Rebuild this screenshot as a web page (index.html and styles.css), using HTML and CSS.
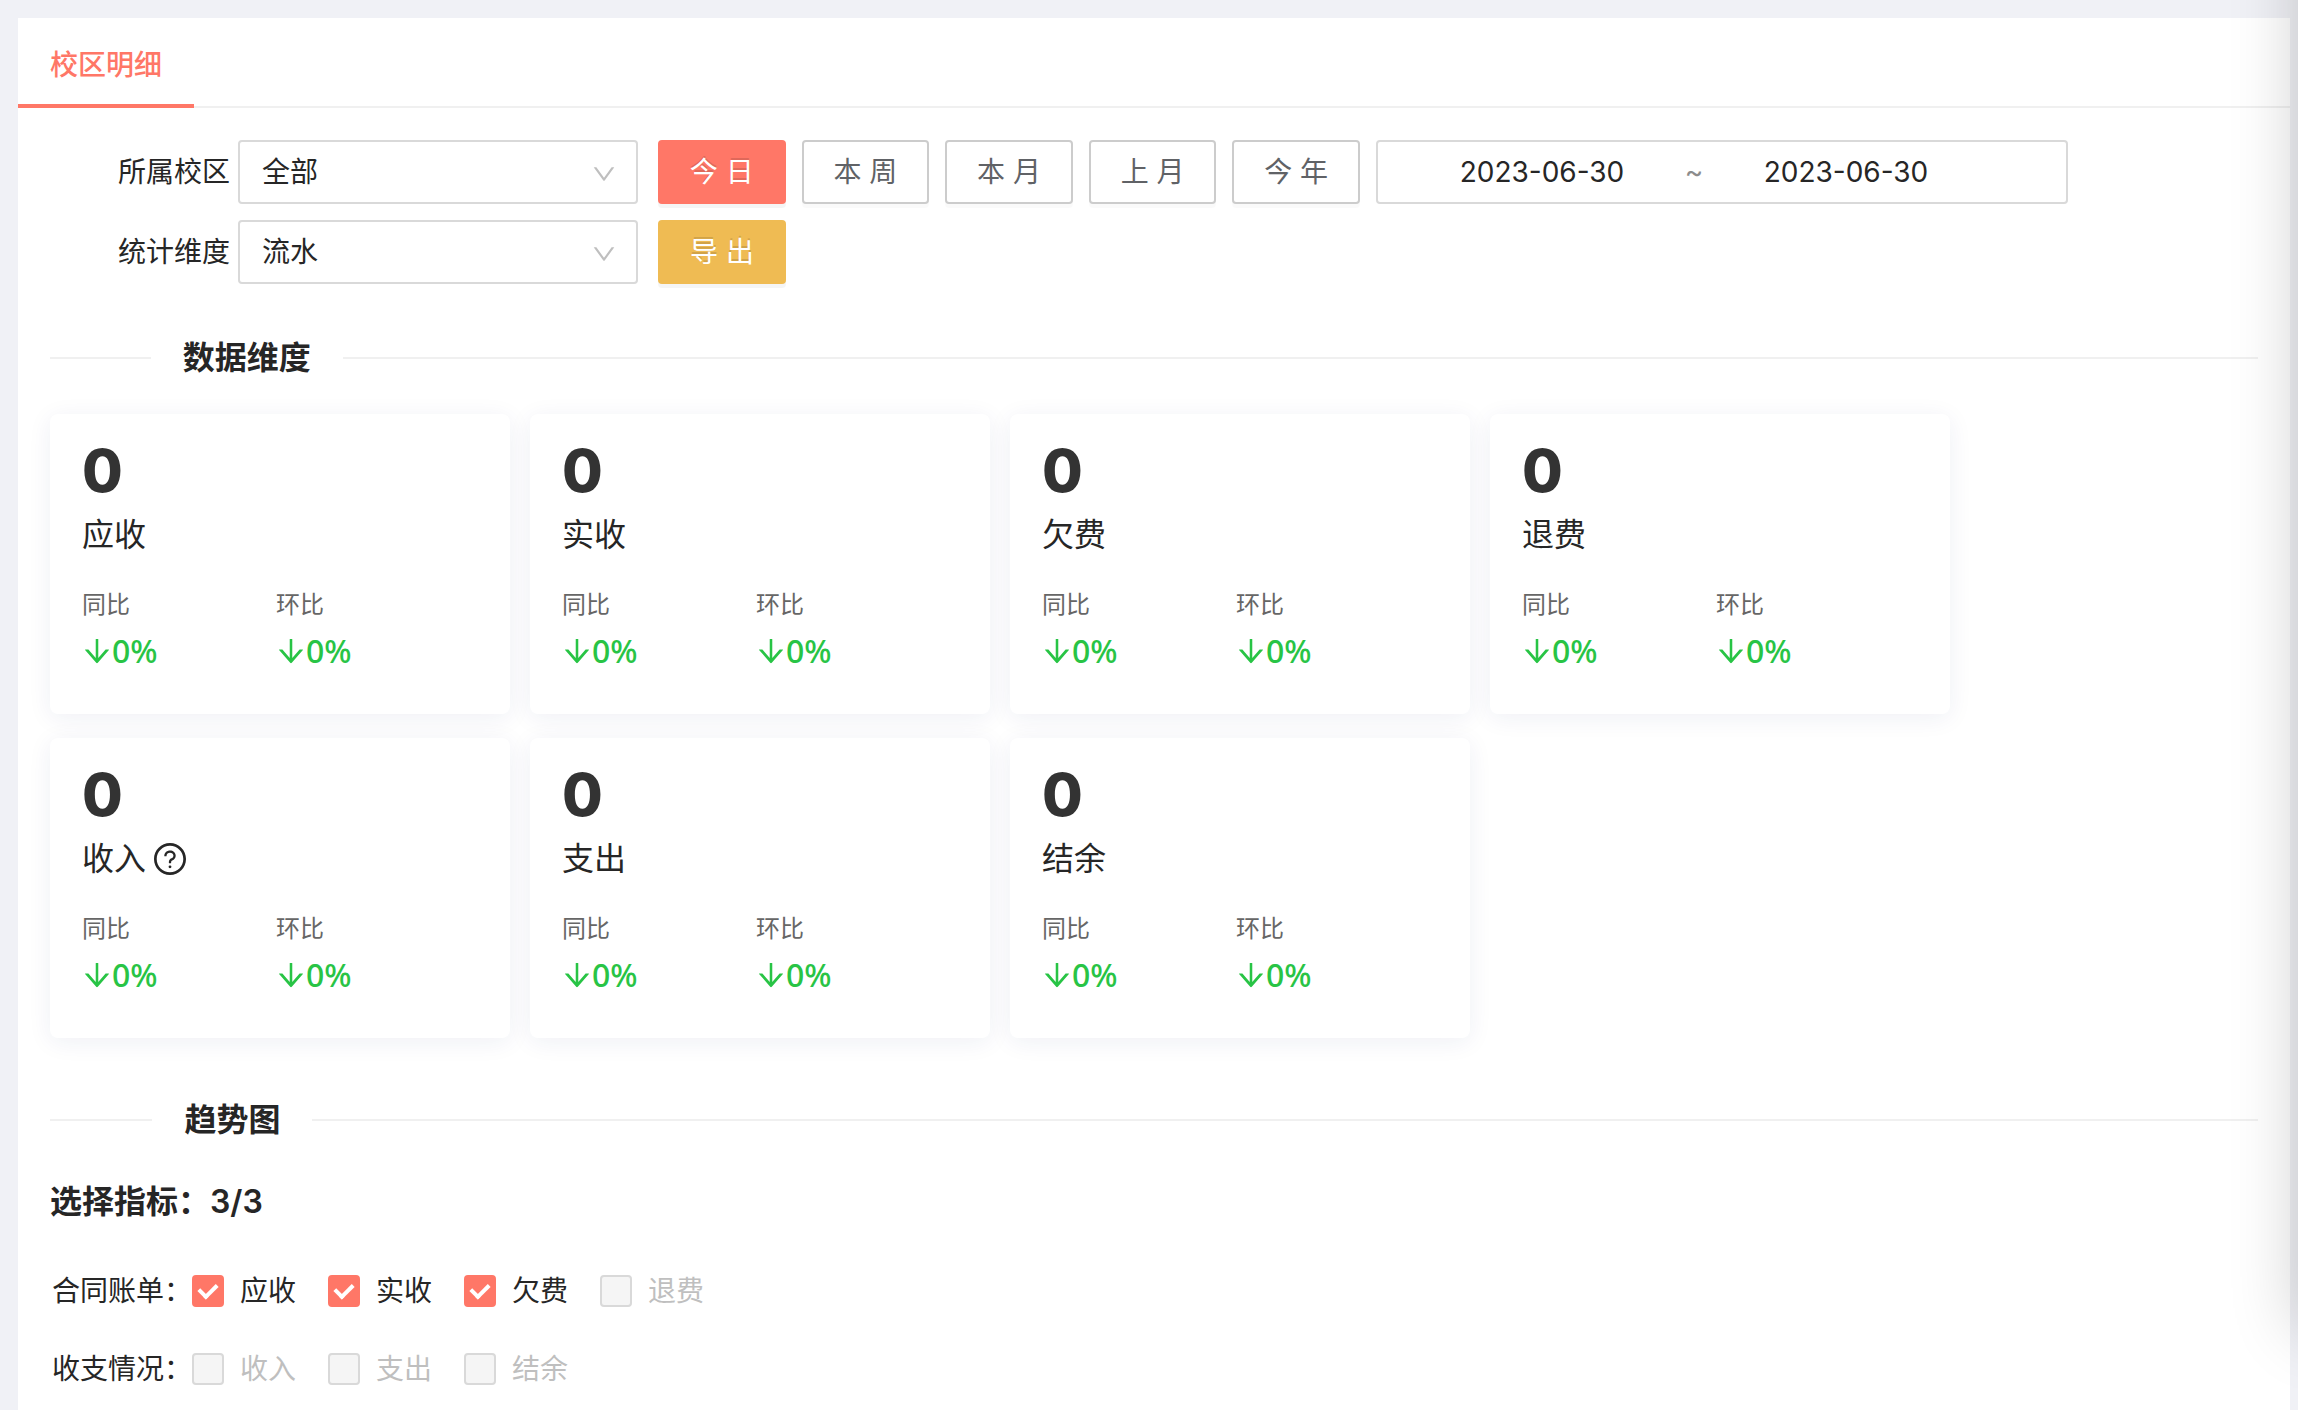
FILE: index.html
```html
<!DOCTYPE html>
<html lang="zh-CN">
<head>
<meta charset="utf-8">
<meta name="viewport" content="width=device-width, initial-scale=1">
<title>校区明细</title>
<link rel="stylesheet" href="styles.css">
</head>
<body>
<svg class="sprite" aria-hidden="true">
  <symbol id="icon-down" viewBox="64 64 896 896"><path d="M884 256h-75c-5.100 0-9.900 2.500-12.900 6.600L512 654.200 227.900 262.600c-3-4.100-7.800-6.600-12.900-6.600h-75c-6.500 0-10.300 7.400-6.500 12.700l352.600 486.100c12.800 17.600 39 17.600 51.700 0l352.600-486.100c3.900-5.300.1-12.700-6.400-12.700z"/></symbol>
  <symbol id="icon-arrow" viewBox="64 64 896 896"><path d="M862 465.300h-81c-4.600 0-9 2-12.100 5.500L550 723.100V160c0-4.400-3.600-8-8-8h-60c-4.400 0-8 3.600-8 8v563.100L255.100 470.800c-3-3.500-7.400-5.500-12.100-5.500h-81c-6.800 0-10.500 8.100-6 13.200L487.900 861a31.960 31.960 0 0 0 48.300 0L868 478.500c4.500-5.200.8-13.200-6-13.200z"/></symbol>
  <symbol id="icon-question" viewBox="64 64 896 896"><path d="M512 64C264.600 64 64 264.600 64 512s200.600 448 448 448 448-200.600 448-448S759.400 64 512 64zm0 820c-205.400 0-372-166.600-372-372s166.600-372 372-372 372 166.600 372 372-166.600 372-372 372z"/><path d="M623.600 316.700C593.600 290.400 554 276 512 276s-81.600 14.500-111.600 40.700C369.200 344 352 380.700 352 420v7.600c0 4.400 3.600 8 8 8h48c4.400 0 8-3.600 8-8V420c0-44.100 43.100-80 96-80s96 35.900 96 80c0 31.100-22 59.600-56.100 72.700-21.200 8.100-39.200 22.300-52.100 40.900-13.100 19-19.900 41.800-19.900 64.900V620c0 4.400 3.600 8 8 8h48c4.400 0 8-3.600 8-8v-22.700a48.300 48.300 0 0 1 30.900-44.800c59-22.700 97.100-74.700 97.100-132.500.1-39.300-17.100-76-48.300-103.300zM472 732a40 40 0 1 0 80 0 40 40 0 1 0-80 0z"/></symbol>
</svg>

<main class="panel">
  <nav class="tabs"><a class="tab" href="#detail" aria-current="page">校区明细</a></nav>

  <div class="content">
    <form class="filters">
      <div class="filter-row">
        <label class="filter-label" for="campus">所属校区</label>
        <div class="select-wrap">
          <select id="campus" class="select"><option>全部</option></select>
          <svg class="select-arrow"><use href="#icon-down"/></svg>
        </div>
        <div class="buttons buttons-period">
          <button type="button" class="btn btn-primary">今 日</button>
          <button type="button" class="btn">本 周</button>
          <button type="button" class="btn">本 月</button>
          <button type="button" class="btn">上 月</button>
          <button type="button" class="btn">今 年</button>
          <div class="range">
            <input class="date" aria-label="开始日期" value="2023-06-30">
            <span class="tilde">~</span>
            <input class="date" aria-label="结束日期" value="2023-06-30">
          </div>
        </div>
      </div>
      <div class="filter-row">
        <label class="filter-label" for="dimension">统计维度</label>
        <div class="select-wrap">
          <select id="dimension" class="select"><option>流水</option></select>
          <svg class="select-arrow"><use href="#icon-down"/></svg>
        </div>
        <div class="buttons">
          <button type="button" class="btn btn-warning">导 出</button>
        </div>
      </div>
    </form>

    <h2 class="divider">数据维度</h2>

    <div class="cards">
      <article class="card">
        <strong class="value">0</strong>
        <h3 class="name">应收</h3>
        <dl class="ratios">
          <div class="ratio"><dt>同比</dt><dd><svg class="arrow"><use href="#icon-arrow"/></svg>0%</dd></div>
          <div class="ratio"><dt>环比</dt><dd><svg class="arrow"><use href="#icon-arrow"/></svg>0%</dd></div>
        </dl>
      </article>
      <article class="card">
        <strong class="value">0</strong>
        <h3 class="name">实收</h3>
        <dl class="ratios">
          <div class="ratio"><dt>同比</dt><dd><svg class="arrow"><use href="#icon-arrow"/></svg>0%</dd></div>
          <div class="ratio"><dt>环比</dt><dd><svg class="arrow"><use href="#icon-arrow"/></svg>0%</dd></div>
        </dl>
      </article>
      <article class="card">
        <strong class="value">0</strong>
        <h3 class="name">欠费</h3>
        <dl class="ratios">
          <div class="ratio"><dt>同比</dt><dd><svg class="arrow"><use href="#icon-arrow"/></svg>0%</dd></div>
          <div class="ratio"><dt>环比</dt><dd><svg class="arrow"><use href="#icon-arrow"/></svg>0%</dd></div>
        </dl>
      </article>
      <article class="card">
        <strong class="value">0</strong>
        <h3 class="name">退费</h3>
        <dl class="ratios">
          <div class="ratio"><dt>同比</dt><dd><svg class="arrow"><use href="#icon-arrow"/></svg>0%</dd></div>
          <div class="ratio"><dt>环比</dt><dd><svg class="arrow"><use href="#icon-arrow"/></svg>0%</dd></div>
        </dl>
      </article>
      <article class="card">
        <strong class="value">0</strong>
        <h3 class="name">收入<svg class="help"><use href="#icon-question"/></svg></h3>
        <dl class="ratios">
          <div class="ratio"><dt>同比</dt><dd><svg class="arrow"><use href="#icon-arrow"/></svg>0%</dd></div>
          <div class="ratio"><dt>环比</dt><dd><svg class="arrow"><use href="#icon-arrow"/></svg>0%</dd></div>
        </dl>
      </article>
      <article class="card">
        <strong class="value">0</strong>
        <h3 class="name">支出</h3>
        <dl class="ratios">
          <div class="ratio"><dt>同比</dt><dd><svg class="arrow"><use href="#icon-arrow"/></svg>0%</dd></div>
          <div class="ratio"><dt>环比</dt><dd><svg class="arrow"><use href="#icon-arrow"/></svg>0%</dd></div>
        </dl>
      </article>
      <article class="card">
        <strong class="value">0</strong>
        <h3 class="name">结余</h3>
        <dl class="ratios">
          <div class="ratio"><dt>同比</dt><dd><svg class="arrow"><use href="#icon-arrow"/></svg>0%</dd></div>
          <div class="ratio"><dt>环比</dt><dd><svg class="arrow"><use href="#icon-arrow"/></svg>0%</dd></div>
        </dl>
      </article>
    </div>

    <h2 class="divider">趋势图</h2>

    <h3 class="picker-title">选择指标：3/3</h3>
    <div class="picker-row" role="group" aria-labelledby="g-bill">
      <span id="g-bill">合同账单：</span>
      <div class="checks">
        <label class="check"><input type="checkbox" checked><span>应收</span></label>
        <label class="check"><input type="checkbox" checked><span>实收</span></label>
        <label class="check"><input type="checkbox" checked><span>欠费</span></label>
        <label class="check"><input type="checkbox" disabled><span>退费</span></label>
      </div>
    </div>
    <div class="picker-row" role="group" aria-labelledby="g-flow">
      <span id="g-flow">收支情况：</span>
      <div class="checks">
        <label class="check"><input type="checkbox" disabled><span>收入</span></label>
        <label class="check"><input type="checkbox" disabled><span>支出</span></label>
        <label class="check"><input type="checkbox" disabled><span>结余</span></label>
      </div>
    </div>
  </div>
</main>
<div class="edge-shadow" aria-hidden="true"></div>
</body>
</html>
```
FILE: styles.css
```css
*,
*::before,
*::after {
  box-sizing: border-box;
}

body {
  margin: 0;
  padding: 18px 8px 0 18px;
  min-height: 100vh;
  display: flex;
  overflow: hidden;
  background: #f0f1f6;
  color: #262626;
  font: 28px/44px Inter, "Noto Sans CJK SC", sans-serif;
}

.sprite {
  position: absolute;
  width: 0;
  height: 0;
}

svg {
  fill: currentColor;
}

.panel {
  flex: 1;
  min-width: 0;
  background: #fff;
}

.tabs {
  display: flex;
  height: 90px;
  box-shadow: inset 0 -2px #f0f0f0;
}

.tab {
  padding: 25px 32px 17px;
  border-bottom: 4px solid #ff7767;
  color: #ff7767;
  font-weight: 500;
  text-decoration: none;
}

.content {
  padding: 32px;
}

.filters {
  display: flex;
  flex-direction: column;
  gap: 16px;
}

.filter-row {
  display: flex;
  align-items: center;
}

.filter-label {
  width: 188px;
  padding-right: 8px;
  text-align: right;
}

.select-wrap {
  position: relative;
  width: 400px;
  margin-right: 20px;
}

.select {
  appearance: none;
  display: block;
  width: 100%;
  height: 64px;
  padding: 0 22px;
  border: 2px solid #d9d9d9;
  border-radius: 4px;
  background: #fff;
  color: inherit;
  font: inherit;
}

.select-arrow {
  position: absolute;
  top: 22px;
  right: 22px;
  width: 24px;
  height: 24px;
  color: #bfbfbf;
  pointer-events: none;
}

.buttons {
  display: flex;
  gap: 16px;
}

.buttons-period {
  width: 1410px;
}

.btn {
  flex: 0 1 128px;
  min-width: 0;
  width: 128px;
  height: 64px;
  padding: 0;
  border: 2px solid #ccc;
  border-radius: 4px;
  background: #fff;
  box-shadow: 0 4px rgba(0, 0, 0, 0.02);
  color: #606266;
  font: inherit;
}

.btn-primary,
.btn-warning {
  border-color: #ff7767;
  background: #ff7767;
  box-shadow: 0 4px rgba(0, 0, 0, 0.04);
  color: #fff;
  text-shadow: 0 -2px rgba(0, 0, 0, 0.12);
}

.btn-warning {
  border-color: #efbb53;
  background: #efbb53;
}

.range {
  flex: 0 0 692px;
  display: flex;
  align-items: center;
  height: 64px;
  padding: 0 22px;
  border: 2px solid #d9d9d9;
  border-radius: 4px;
}

.date {
  width: 284px;
  padding: 0;
  border: 0;
  background: none;
  color: inherit;
  font: inherit;
  text-align: center;
}

.tilde {
  width: 20px;
  color: #8c8c8c;
  text-align: center;
}

.divider {
  display: flex;
  align-items: center;
  margin: 49px 0 31px;
  font-size: 32px;
  font-weight: 600;
  line-height: 50px;
  gap: 32px;
}

.divider::before,
.divider::after {
  content: "";
  flex: 5 1 0;
  height: 2px;
  background: #f0f0f0;
}

.divider::after {
  flex-grow: 95;
}

.cards {
  display: flex;
  flex-wrap: wrap;
  gap: 24px 20px;
  padding-bottom: 8px;
}

.card {
  width: 460px;
  height: 300px;
  padding: 27px 32px;
  border-radius: 8px;
  background: #fff;
  box-shadow: 0 4px 24px rgba(30, 40, 120, 0.07);
}

.value {
  display: block;
  color: #333;
  font-size: 59px;
  font-weight: 800;
  line-height: 60px;
}

.name {
  display: flex;
  align-items: center;
  gap: 8px;
  margin: 9px 0 21px;
  font-size: 32px;
  font-weight: 400;
  line-height: 50px;
}

.help {
  width: 32px;
  height: 32px;
}

.ratios {
  display: flex;
  margin: 0;
}

.ratio {
  width: 194px;
}

.ratio dt {
  color: #666;
  font-size: 24px;
  line-height: 48px;
}

.ratio dd {
  display: flex;
  align-items: center;
  margin: 0;
  color: #28c445;
  font-family: "Noto Sans", sans-serif;
  font-size: 32px;
  font-weight: 500;
  line-height: 44px;
}

.arrow {
  width: 30px;
  height: 30px;
}

.picker-title {
  margin: 32px 0 42px;
  font-size: 32px;
  font-weight: 600;
  line-height: 50px;
}

.picker-row {
  display: flex;
  padding-left: 2px;
  margin-bottom: 34px;
}

.checks {
  display: flex;
  gap: 16px;
}

.check {
  display: flex;
  align-items: center;
}

.check span {
  padding: 0 16px;
}

.check input {
  appearance: none;
  display: grid;
  place-items: center;
  width: 32px;
  height: 32px;
  margin: 0;
  border: 2px solid #d9d9d9;
  border-radius: 4px;
  background: #fff;
}

.check input:checked {
  border-color: #ff7767;
  background: #ff7767;
}

.check input:checked::before {
  content: "";
  width: 12px;
  height: 18px;
  margin-bottom: 4px;
  border: solid #fff;
  border-width: 0 4px 4px 0;
  transform: rotate(45deg);
}

.check input:disabled {
  background: #f5f5f5;
}

.check input:disabled + span {
  color: #bfbfbf;
}

.edge-shadow {
  position: fixed;
  top: -100px;
  bottom: 80px;
  left: 100%;
  width: 400px;
  box-shadow: 0 0 64px rgba(0, 0, 0, 0.2);
  pointer-events: none;
}
```
